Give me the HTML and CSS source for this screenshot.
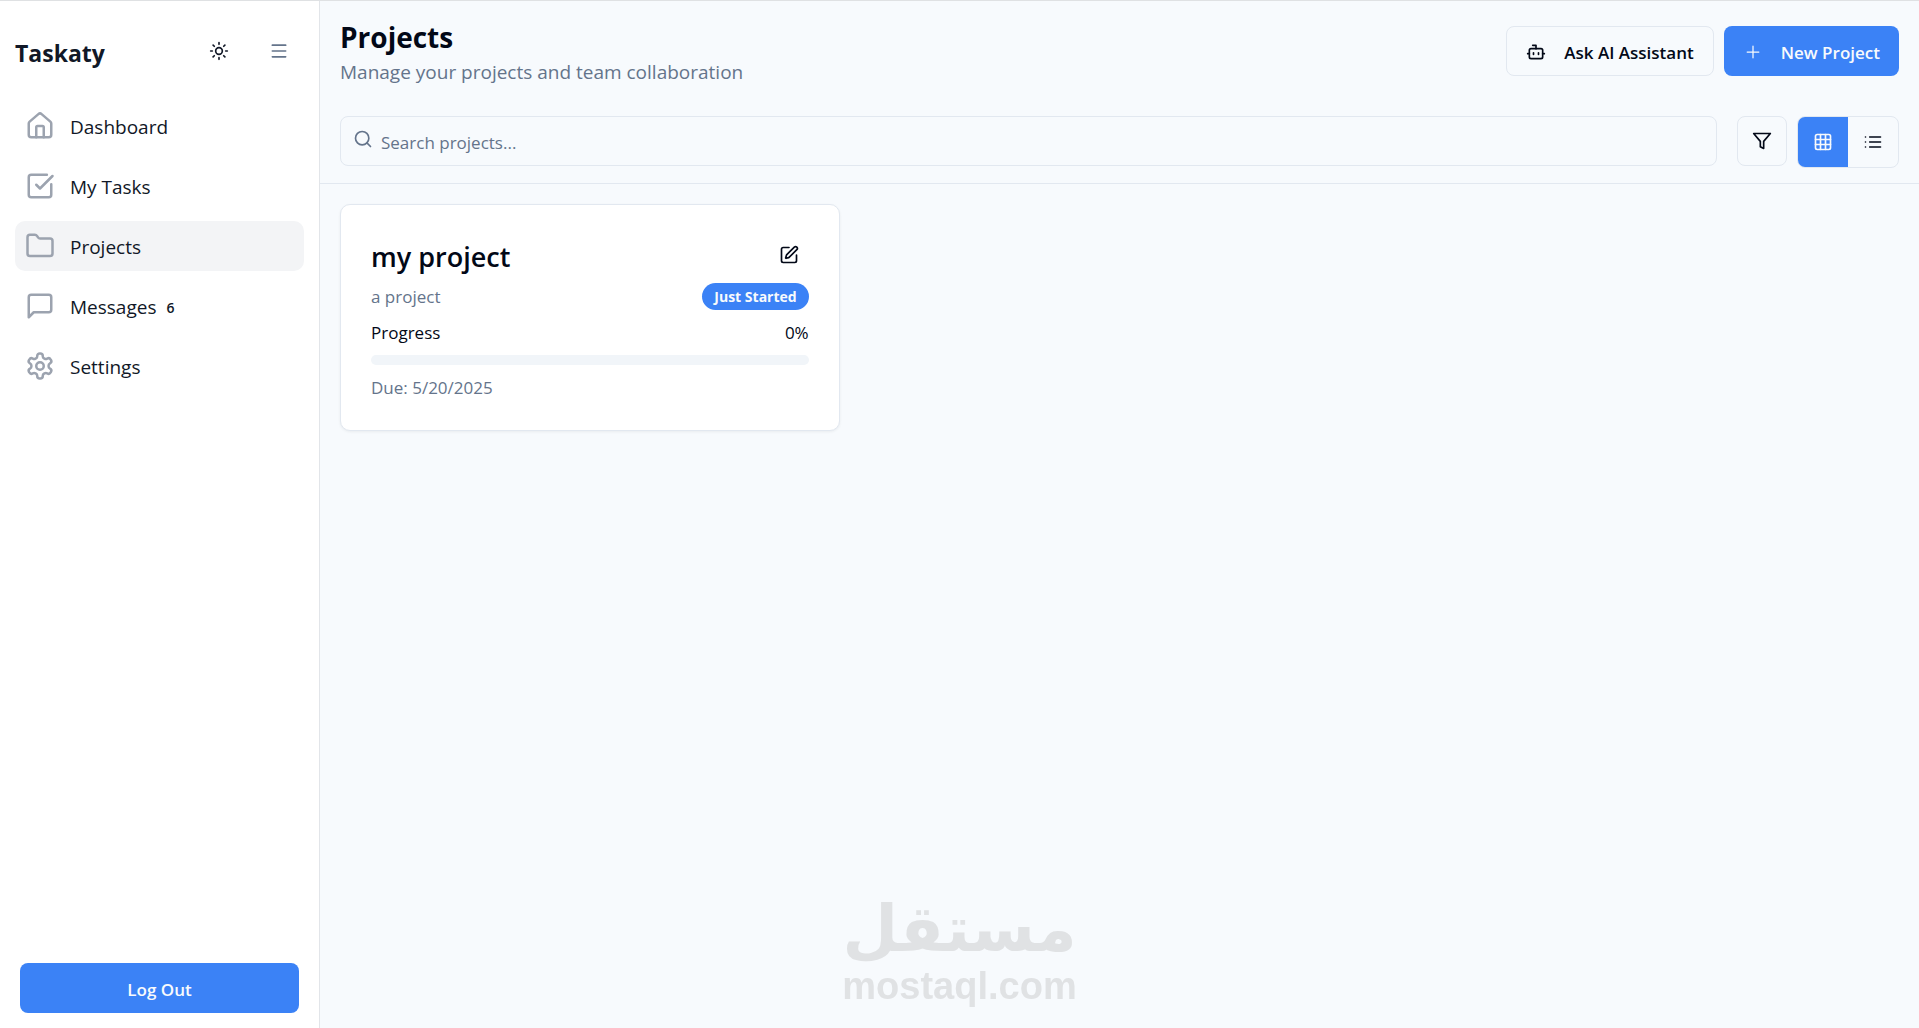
FILE: index.html
```
<!DOCTYPE html>
<html lang="en">
<head>
    <meta charset="UTF-8">
    <meta name="viewport" content="width=device-width, initial-scale=1.0">
    <title>Taskaty - Projects</title>
    <link rel="stylesheet" href="styles.css">
</head>
<body>
    <!-- Sidebar -->
    <aside class="sidebar">
        <div class="sidebar-header">
            <h2>Taskaty</h2>
            <button type="button" class="icon-btn" aria-label="Toggle theme">
                <svg class="icon" viewBox="0 0 24 24"><circle cx="12" cy="12" r="4"/><path d="M12 2v2M12 20v2M4.93 4.93l1.41 1.41M17.66 17.66l1.41 1.41M2 12h2M20 12h2M6.34 17.66l-1.41 1.41M19.07 4.93l-1.41 1.41"/></svg>
            </button>
            <button type="button" class="icon-btn menu-btn" aria-label="Toggle sidebar">
                <svg class="icon" viewBox="0 0 24 24"><path d="M4 5h16M4 12h16M4 19h16"/></svg>
            </button>
        </div>

        <nav class="nav">
            <a href="#" class="nav-link">
                <svg class="icon-lg" viewBox="0 0 24 24"><path d="M15 21v-8a1 1 0 0 0-1-1h-4a1 1 0 0 0-1 1v8"/><path d="M3 10a2 2 0 0 1 .709-1.528l7-5.999a2 2 0 0 1 2.582 0l7 5.999A2 2 0 0 1 21 10v9a2 2 0 0 1-2 2H5a2 2 0 0 1-2-2z"/></svg>
                <span>Dashboard</span>
            </a>
            <a href="#" class="nav-link">
                <svg class="icon-lg" viewBox="0 0 24 24"><path d="M21 10.5V19a2 2 0 0 1-2 2H5a2 2 0 0 1-2-2V5a2 2 0 0 1 2-2h12.5"/><path d="m9 11 3 3L22 4"/></svg>
                <span>My Tasks</span>
            </a>
            <a href="#" class="nav-link active">
                <svg class="icon-lg" viewBox="0 0 24 24"><path d="M20 20a2 2 0 0 0 2-2V8a2 2 0 0 0-2-2h-7.9a2 2 0 0 1-1.69-.9L9.6 3.9A2 2 0 0 0 7.93 3H4a2 2 0 0 0-2 2v13a2 2 0 0 0 2 2Z"/></svg>
                <span>Projects</span>
            </a>
            <a href="#" class="nav-link">
                <svg class="icon-lg" viewBox="0 0 24 24"><path d="M21 15a2 2 0 0 1-2 2H7l-4 4V5a2 2 0 0 1 2-2h14a2 2 0 0 1 2 2z"/></svg>
                <span>Messages</span>
                <span class="count">6</span>
            </a>
            <a href="#" class="nav-link">
                <svg class="icon-lg" viewBox="0 0 24 24"><path d="M12.22 2h-.44a2 2 0 0 0-2 2v.18a2 2 0 0 1-1 1.73l-.43.25a2 2 0 0 1-2 0l-.15-.08a2 2 0 0 0-2.73.73l-.22.38a2 2 0 0 0 .73 2.73l.15.1a2 2 0 0 1 1 1.72v.51a2 2 0 0 1-1 1.74l-.15.09a2 2 0 0 0-.73 2.73l.22.38a2 2 0 0 0 2.73.73l.15-.08a2 2 0 0 1 2 0l.43.25a2 2 0 0 1 1 1.73V20a2 2 0 0 0 2 2h.44a2 2 0 0 0 2-2v-.18a2 2 0 0 1 1-1.73l.43-.25a2 2 0 0 1 2 0l.15.08a2 2 0 0 0 2.73-.73l.22-.39a2 2 0 0 0-.73-2.73l-.15-.08a2 2 0 0 1-1-1.74v-.5a2 2 0 0 1 1-1.74l.15-.09a2 2 0 0 0 .73-2.73l-.22-.38a2 2 0 0 0-2.73-.73l-.15.08a2 2 0 0 1-2 0l-.43-.25a2 2 0 0 1-1-1.73V4a2 2 0 0 0-2-2z"/><circle cx="12" cy="12" r="3"/></svg>
                <span>Settings</span>
            </a>
        </nav>

        <div class="sidebar-footer">
            <button type="button" class="btn btn-primary logout">Log Out</button>
        </div>
    </aside>

    <!-- Main content -->
    <main class="main-content">
        <header class="header">
            <div class="header-top">
                <div>
                    <h1>Projects</h1>
                    <p class="subtitle">Manage your projects and team collaboration</p>
                </div>
                <div class="actions">
                    <button type="button" class="btn btn-outline">
                        <svg class="icon" viewBox="0 0 24 24"><path d="M12 8V4H8"/><rect width="16" height="12" x="4" y="8" rx="2"/><path d="M2 14h2M20 14h2M15 13v2M9 13v2"/></svg>
                        Ask AI Assistant
                    </button>
                    <button type="button" class="btn btn-primary">
                        <svg class="icon icon-thin" viewBox="0 0 24 24"><path d="M5 12h14M12 5v14"/></svg>
                        New Project
                    </button>
                </div>
            </div>

            <div class="toolbar">
                <div class="search">
                    <svg class="icon search-icon" viewBox="0 0 24 24"><circle cx="11" cy="11" r="8"/><path d="m21 21-4.3-4.3"/></svg>
                    <input type="text" placeholder="Search projects..." aria-label="Search projects">
                </div>
                <button type="button" class="filter-btn" aria-label="Filter">
                    <svg class="icon" viewBox="0 0 24 24"><path d="M22 3H2l8 9.46V19l4 2v-8.54z"/></svg>
                </button>
                <div class="view-toggle">
                    <button type="button" class="selected" aria-label="Grid view">
                        <svg class="icon" viewBox="0 0 24 24"><rect width="18" height="18" x="3" y="3" rx="2"/><path d="M3 9h18M3 15h18M9 3v18M15 3v18"/></svg>
                    </button>
                    <button type="button" aria-label="List view">
                        <svg class="icon" viewBox="0 0 24 24"><path d="M8 6h13M8 12h13M8 18h13M3 6h.01M3 12h.01M3 18h.01"/></svg>
                    </button>
                </div>
            </div>
        </header>

        <section class="project-grid">
            <article class="card">
                <div class="card-header">
                    <h3>my project</h3>
                    <button type="button" class="edit-btn" aria-label="Edit project">
                        <svg class="icon" viewBox="0 0 24 24"><path d="M12 3H5a2 2 0 0 0-2 2v14a2 2 0 0 0 2 2h14a2 2 0 0 0 2-2v-7"/><path d="M18.375 2.625a1 1 0 0 1 3 3l-9.013 9.014a2 2 0 0 1-.853.505l-2.873.84a.5.5 0 0 1-.62-.62l.84-2.873a2 2 0 0 1 .506-.852z"/></svg>
                    </button>
                </div>
                <div class="card-row">
                    <p class="muted">a project</p>
                    <span class="badge">Just Started</span>
                </div>
                <div class="card-row">
                    <span>Progress</span>
                    <span>0%</span>
                </div>
                <div class="progress" role="progressbar" aria-label="Progress" aria-valuenow="0" aria-valuemin="0" aria-valuemax="100"></div>
                <p class="muted">Due: 5/20/2025</p>
            </article>
        </section>
    </main>

    <!-- Watermark -->
    <div class="watermark">
        <span class="watermark-ar" lang="ar">مستقل</span>
        <span class="watermark-en">mostaql.com</span>
    </div>
</body>
</html>
```
FILE: styles.css
```
* {
    margin: 0;
    padding: 0;
    box-sizing: border-box;
}

body {
    font-family: "Segoe UI", "Open Sans", sans-serif;
    font-size: 17px;
    line-height: 25px;
    background: #f7fafd;
    color: #020817;
    display: flex;
    min-height: 100vh;
    border-top: 1px solid #dfe1e3;
}

button {
    font: inherit;
    color: inherit;
    background: none;
    border: none;
    cursor: pointer;
    display: flex;
    align-items: center;
    justify-content: center;
}

/* Icons */
.icon,
.icon-lg {
    width: 20px;
    height: 20px;
    flex-shrink: 0;
    fill: none;
    stroke: currentColor;
    stroke-width: 2;
    stroke-linecap: round;
    stroke-linejoin: round;
}

.icon-lg {
    width: 30px;
    height: 30px;
    color: #9ca3af;
}

.icon-thin {
    stroke-width: 1.5;
}

/* Sidebar */
.sidebar {
    width: 320px;
    flex-shrink: 0;
    background: #fff;
    border-right: 1px solid #e2e5e9;
    padding: 25px 15px 15px;
    display: flex;
    flex-direction: column;
    color: #111827;
}

.sidebar-header {
    display: flex;
    align-items: center;
    gap: 10px;
    margin-bottom: 25px;
}

.sidebar-header h2 {
    flex: 1;
    padding-top: 4px;
    font-size: 23px;
    font-weight: 700;
}

.icon-btn {
    width: 50px;
    height: 50px;
}

.menu-btn {
    color: #64748b;
}

.nav {
    display: flex;
    flex-direction: column;
    gap: 10px;
}

.nav-link {
    display: flex;
    align-items: center;
    gap: 10px;
    height: 50px;
    padding: 0 10px;
    border-radius: 10px;
    color: inherit;
    font-size: 19px;
    text-decoration: none;
}

.nav-link span {
    padding-top: 2px;
}

.nav-link .icon-lg {
    margin-right: 5px;
}

.nav-link:hover,
.nav-link.active {
    background: #f3f4f6;
}

.nav-link .count {
    font-size: 14px;
    font-weight: 600;
}

.sidebar-footer {
    margin-top: auto;
    padding: 0 5px;
}

/* Buttons */
.btn {
    height: 50px;
    padding: 2px 19px 0;
    gap: 18px;
    border-radius: 8px;
    font-weight: 600;
}

.btn-primary {
    background: #3b82f6;
    color: #f8fafc;
}

.btn-outline {
    border: 1px solid #e2e8f0;
}

.logout {
    width: 100%;
}

/* Main content */
.main-content {
    flex: 1;
}

.header {
    padding: 15px 20px;
    border-bottom: 1px solid #e2e8f0;
    display: flex;
    flex-direction: column;
    gap: 30px;
}

.header-top {
    display: flex;
    align-items: center;
    justify-content: space-between;
}

.header h1 {
    font-size: 28px;
    font-weight: 700;
    line-height: 42px;
}

.subtitle {
    font-size: 19px;
    line-height: 28px;
    color: #64748b;
}

.actions {
    display: flex;
    gap: 10px;
}

.toolbar {
    display: flex;
    align-items: flex-start;
    gap: 10px;
}

.search {
    flex: 1;
    position: relative;
    margin-right: 10px;
}

.search-icon {
    position: absolute;
    left: 13px;
    top: 13px;
    color: #64748b;
}

.search input {
    display: block;
    width: 100%;
    height: 50px;
    padding: 2px 20px 0 40px;
    border: 1px solid #e2e8f0;
    border-radius: 8px;
    background: transparent;
    color: inherit;
    font: inherit;
}

.search input::placeholder {
    color: #64748b;
    opacity: 1;
}

.filter-btn {
    width: 50px;
    height: 50px;
    border: 1px solid #e2e8f0;
    border-radius: 8px;
}

.view-toggle {
    display: flex;
    border: 1px solid #e2e8f0;
    border-radius: 8px;
    overflow: hidden;
}

.view-toggle button {
    width: 50px;
    height: 50px;
}

.view-toggle .selected {
    background: #3b82f6;
    color: #f8fafc;
}

/* Projects */
.project-grid {
    display: grid;
    grid-template-columns: repeat(3, 1fr);
    gap: 30px;
    padding: 20px;
}

.card {
    padding: 30px;
    background: #fff;
    border: 1px solid #e2e8f0;
    border-radius: 10px;
    box-shadow: 0 1px 3px rgba(0, 0, 0, 0.06);
}

.card-header,
.card-row {
    display: flex;
    align-items: center;
    justify-content: space-between;
    margin-bottom: 10px;
}

.card-header {
    margin-bottom: 8px;
}

.card-header h3 {
    padding-top: 4px;
    font-size: 27px;
    font-weight: 600;
    line-height: 36px;
}

.edit-btn {
    width: 40px;
    height: 40px;
}

.muted {
    color: #64748b;
}

.badge {
    padding: 1px 12px;
    border-radius: 14px;
    background: #3b82f6;
    color: #f8fafc;
    font-size: 14px;
    font-weight: 700;
}

.progress {
    height: 10px;
    margin-bottom: 10px;
    border-radius: 5px;
    background: #f1f5f9;
}

/* Watermark */
.watermark {
    position: fixed;
    left: 0;
    right: 0;
    bottom: 22px;
    display: flex;
    flex-direction: column;
    align-items: center;
    color: #e0e2e4;
    font-weight: 700;
    pointer-events: none;
}

.watermark-ar {
    font-family: "DejaVu Sans", sans-serif;
    font-size: 64px;
    line-height: 74px;
}

.watermark-en {
    font-family: "Liberation Sans", Arial, sans-serif;
    font-size: 38px;
    line-height: 40px;
}
```
